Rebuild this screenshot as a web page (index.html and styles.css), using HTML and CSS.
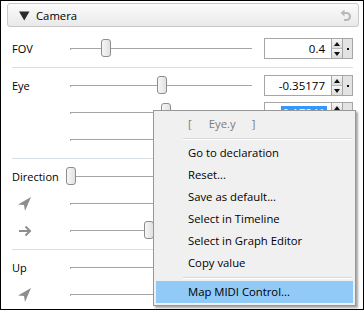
FILE: index.html
```html
<!DOCTYPE html>
<html>
<head>
<meta charset="utf-8">
<link rel="stylesheet" href="styles.css">
</head>
<body>
<div class="window">
  <div class="header">
    <svg class="tri" width="11" height="10" viewBox="0 0 11 10"><polygon points="0,0.5 10.5,0.5 5.25,9.5" fill="#2b2b2b"/></svg>
    <span class="title">Camera</span>
    <svg class="undo" width="13" height="15" viewBox="0 0 13 15"><path d="M5.5 1.5 L1.5 5 L5.5 8.5 Z" fill="#b8b8b8"/><path d="M3 5 H7.5 A3.5 3.5 0 0 1 7.5 12 H5" fill="none" stroke="#b8b8b8" stroke-width="2.2"/></svg>
  </div>
  <div class="props">
    <div class="row">
      <span class="label">FOV</span>
      <div class="slider"><div class="track"></div><div class="handle" style="left:31px"></div></div>
      <div class="spin"><div class="field"><span class="val">0.4</span></div><div class="arrows"><div class="up"></div><div class="down"></div></div><div class="dotbtn"><i></i></div></div>
    </div>
    <div class="sep"></div>
    <div class="row">
      <span class="label">Eye</span>
      <div class="slider"><div class="track"></div><div class="handle" style="left:87px"></div></div>
      <div class="spin"><div class="field"><span class="val">-0.35177</span></div><div class="arrows"><div class="up"></div><div class="down"></div></div><div class="dotbtn"><i></i></div></div>
    </div>
    <div class="row">
      <span class="label"></span>
      <div class="slider"><div class="track"></div><div class="handle" style="left:91px"></div></div>
      <div class="spin"><div class="field"><span class="val sel">0.17241</span></div><div class="arrows"><div class="up"></div><div class="down"></div></div><div class="dotbtn"><i></i></div></div>
    </div>
    <div class="row">
      <span class="label"></span>
      <div class="slider"><div class="track"></div><div class="handle" style="left:120px"></div></div>
      <div class="spin"><div class="field"></div><div class="arrows"><div class="up"></div><div class="down"></div></div><div class="dotbtn"><i></i></div></div>
    </div>
    <div class="sep"></div>
    <div class="row">
      <span class="label">Direction</span>
      <div class="slider"><div class="track"></div><div class="handle" style="left:-4px"></div></div>
      <div class="spin"><div class="field"></div><div class="arrows"><div class="up"></div><div class="down"></div></div><div class="dotbtn"><i></i></div></div>
    </div>
    <div class="row">
      <span class="label"><svg width="16" height="16" viewBox="0 0 16 16"><polygon points="14,1 1,8.5 7,9 8,15" fill="#8e8e8e"/></svg></span>
      <div class="slider"><div class="track"></div><div class="handle" style="left:110px"></div></div>
      <div class="spin"><div class="field"></div><div class="arrows"><div class="up"></div><div class="down"></div></div><div class="dotbtn"><i></i></div></div>
    </div>
    <div class="row">
      <span class="label"><svg width="16" height="12" viewBox="0 0 16 12"><path d="M2 6 H13 M8.5 1.5 L13 6 L8.5 10.5" fill="none" stroke="#8e8e8e" stroke-width="2"/></svg></span>
      <div class="slider"><div class="track"></div><div class="handle" style="left:74px"></div></div>
      <div class="spin"><div class="field"></div><div class="arrows"><div class="up"></div><div class="down"></div></div><div class="dotbtn"><i></i></div></div>
    </div>
    <div class="sep"></div>
    <div class="row">
      <span class="label">Up</span>
      <div class="slider"><div class="track"></div><div class="handle" style="left:110px"></div></div>
      <div class="spin"><div class="field"></div><div class="arrows"><div class="up"></div><div class="down"></div></div><div class="dotbtn"><i></i></div></div>
    </div>
    <div class="row">
      <span class="label"><svg width="16" height="16" viewBox="0 0 16 16"><polygon points="14,1 1,8.5 7,9 8,15" fill="#8e8e8e"/></svg></span>
      <div class="slider"><div class="track"></div><div class="handle" style="left:140px"></div></div>
      <div class="spin"><div class="field"></div><div class="arrows"><div class="up"></div><div class="down"></div></div><div class="dotbtn"><i></i></div></div>
    </div>
  </div>
  <div class="menu">
    <div class="item title-item"><span>[</span><span class="nm">Eye.y</span><span>]</span></div>
    <div class="msep"></div>
    <div class="item">Go to declaration</div>
    <div class="item">Reset...</div>
    <div class="item">Save as default...</div>
    <div class="item">Select in Timeline</div>
    <div class="item">Select in Graph Editor</div>
    <div class="item">Copy value</div>
    <div class="msep"></div>
    <div class="item hl">Map MIDI Control...</div>
  </div>
</div>
</body>
</html>
```
FILE: styles.css
```css
html, body {
  margin: 0;
  padding: 0;
  background: #000;
}
.window {
  position: relative;
  box-sizing: border-box;
  width: 364px;
  height: 310px;
  border: 1px solid #000;
  background: #fff;
  overflow: hidden;
  font-family: "Open Sans", "Liberation Sans", sans-serif;
  font-size: 11px;
  color: #000;
}
.header {
  box-sizing: border-box;
  height: 24px;
  margin: 2px 4px 0 6px;
  border: 1px solid #c8c8c8;
  border-radius: 3px;
  background: linear-gradient(#fbfbfb, #e9e9e9);
  display: flex;
  align-items: center;
  padding-left: 11px;
  padding-right: 6px;
}
.tri { margin-top: 1px; }
.title {
  margin-left: 6px;
  font-size: 11.3px;
  flex: 1;
}
.undo { display: block; }
.props {
  margin-top: 8px;
  display: flex;
  flex-direction: column;
}
.row {
  height: 27px;
  display: flex;
  align-items: center;
  padding-left: 11px;
}
.label {
  width: 58px;
  flex: none;
  display: flex;
  align-items: center;
  box-sizing: border-box;
}
.label svg { margin-left: 5px; }
.slider {
  position: relative;
  width: 182px;
  height: 19px;
  flex: none;
}
.track {
  position: absolute;
  left: 0;
  right: 0;
  top: 9px;
  height: 1px;
  background: #a5a5a5;
}
.track::before {
  content: "";
  position: absolute;
  left: 0;
  top: 0;
  width: 1px;
  height: 2px;
  background: #a5a5a5;
}
.handle {
  position: absolute;
  top: 0;
  width: 10px;
  height: 18px;
  box-sizing: border-box;
  border: 1px solid #8d8d8d;
  border-radius: 3px;
  background: linear-gradient(90deg, #f6f6f6, #e2e2e2);
}
.spin {
  margin-left: 12px;
  display: flex;
  height: 21px;
  flex: none;
}
.field {
  box-sizing: border-box;
  width: 68px;
  height: 21px;
  border: 1px solid #a6a6a6;
  background: #fff;
  display: flex;
  align-items: center;
  justify-content: flex-end;
  padding-right: 4px;
  font-size: 11.5px;
}
.val { padding: 0 2px; line-height: 14px; }
.val.sel { background: #3399ff; color: #fff; }
.arrows {
  box-sizing: border-box;
  width: 11px;
  height: 21px;
  border: 1px solid #a6a6a6;
  border-left: none;
  display: flex;
  flex-direction: column;
}
.up, .down {
  flex: 1;
  position: relative;
  background: linear-gradient(#f6f6f6, #dcdcdc);
}
.up { border-bottom: 1px solid #b8b8b8; }
.up::after, .down::after {
  content: "";
  position: absolute;
  left: 2px;
  width: 0;
  height: 0;
  border-left: 3px solid transparent;
  border-right: 3px solid transparent;
}
.up::after { top: 3px; border-bottom: 4px solid #111; }
.down::after { top: 3px; border-top: 4px solid #111; }
.dotbtn {
  box-sizing: border-box;
  width: 10px;
  height: 21px;
  border: 1px solid #a6a6a6;
  border-left: none;
  background: #e3e3e3;
  display: flex;
  align-items: center;
  justify-content: center;
}
.dotbtn i {
  display: block;
  width: 2px;
  height: 2px;
  background: #111;
}
.sep {
  height: 1px;
  margin: 5px 10px 4px 11px;
  background: #d8e0e6;
}
.menu {
  position: absolute;
  left: 152px;
  top: 109px;
  width: 203px;
  box-sizing: border-box;
  border: 1px solid #979797;
  background: #f0f0f0;
  padding: 2px;
  box-shadow: 2px 2px 2px rgba(0, 0, 0, 0.35);
  font-size: 11.3px;
}
.item {
  height: 22px;
  line-height: 22px;
  padding-left: 32px;
  white-space: nowrap;
}
.title-item {
  color: #7c7c7c;
  display: flex;
}
.title-item .nm { margin: 0 16px 0 17px; }
.msep {
  height: 7px;
  margin-left: 27px;
  margin-right: 1px;
  box-sizing: border-box;
  border-top: 3px solid transparent;
}
.msep::before {
  content: "";
  display: block;
  height: 1px;
  background: #d7d7d7;
  border-bottom: 1px solid #fff;
}
.item.hl {
  background: #91c9f7;
}
```
